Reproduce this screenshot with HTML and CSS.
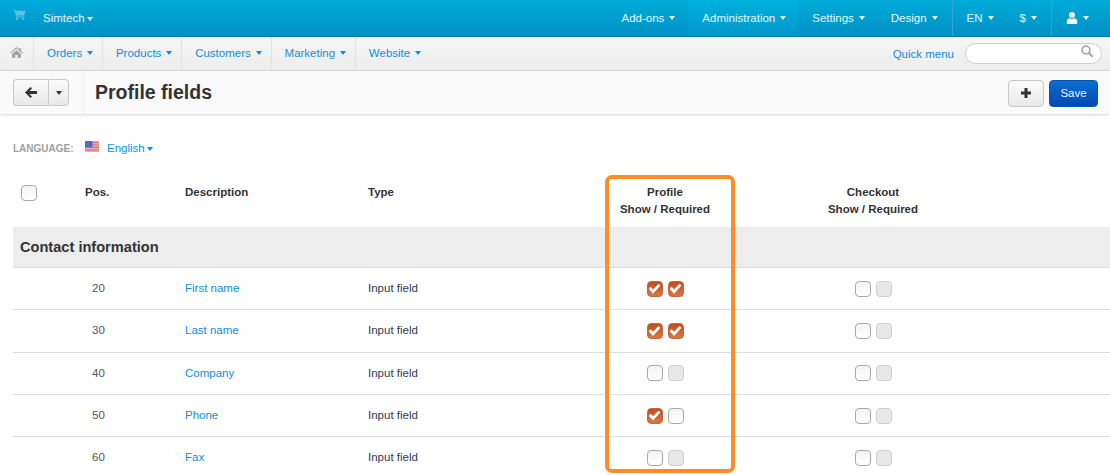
FILE: index.html
```html
<!DOCTYPE html>
<html lang="en">
<head>
<meta charset="utf-8">
<title>Profile fields</title>
<link rel="stylesheet" href="styles.css">
</head>
<body>
<header class="topbar">
  <div class="top-left">
    <svg class="cart" viewBox="0 0 14 12"><path d="M0 .5h2.500l.4 1.500H13.500l-1.300 5H4.300l.3 1.200h7.900v1.200H3.500L1.600 1.700H0z"/><circle cx="4.500" cy="10.800" r="1.200"/><circle cx="11" cy="10.800" r="1.200"/></svg>
    <span class="store">Simtech<i class="caret tight"></i></span>
  </div>
  <nav class="top-nav">
    <a class="top-item first">Add-ons<i class="caret"></i></a>
    <a class="top-item active">Administration<i class="caret"></i></a>
    <a class="top-item">Settings<i class="caret"></i></a>
    <a class="top-item last">Design<i class="caret"></i></a>
    <a class="top-item sep lang">EN<i class="caret"></i></a>
    <a class="top-item cur">$<i class="caret"></i></a>
    <a class="top-item sep user"><svg class="user-icon" viewBox="0 0 12 12"><circle cx="6" cy="3" r="2.900"/><path d="M.8 12V9.200C.8 7.400 2.200 6.400 3.800 6.200 4.400 6.700 5.100 7 6 7s1.600-.3 2.200-.8c1.600.2 3 1.200 3 3V12z"/></svg><i class="caret"></i></a>
  </nav>
</header>
<div class="subnav">
  <a class="sub-item home"><svg class="home-icon" viewBox="0 0 13 11"><path d="M6.500 0 9.500 2.600V1h1.600v3L13 5.700l-.7.800L6.500 1.500.7 6.500 0 5.700z"/><path d="M2 7 6.500 3 11 7v4H7.700V8H5.300v3H2z"/></svg></a>
  <a class="sub-item">Orders<i class="caret"></i></a>
  <a class="sub-item">Products<i class="caret"></i></a>
  <a class="sub-item">Customers<i class="caret"></i></a>
  <a class="sub-item">Marketing<i class="caret"></i></a>
  <a class="sub-item plain">Website<i class="caret"></i></a>
  <a class="quick">Quick menu</a>
  <div class="search"><svg class="search-icon" viewBox="0 0 12 12"><circle cx="5" cy="5" r="3.900" fill="none" stroke="#a9a9a9" stroke-width="1.700"/><path d="m8 8 3.200 3.200" stroke="#a9a9a9" stroke-width="2.200" stroke-linecap="round"/></svg></div>
</div>
<div class="titlebar">
  <div class="btn-group">
    <button class="btn back"><svg class="arrow" viewBox="0 0 12 11"><path d="M5.500 0 7 1.500 4.500 4H12v3H4.500L7 9.500 5.500 11 0 5.500z"/></svg></button>
    <button class="btn more"><i class="caret dark"></i></button>
  </div>
  <h1 class="title">Profile fields</h1>
  <button class="btn plus"><svg class="plus-icon" viewBox="0 0 10 10"><path d="M3.500 0h3v3.500H10v3H6.500V10h-3V6.500H0v-3h3.500z"/></svg></button>
  <button class="btn save">Save</button>
</div>
<main class="content">
  <div class="language">
    <span class="lang-label">LANGUAGE:</span>
    <svg class="flag" viewBox="0 0 14 11"><rect width="14" height="11" fill="#f3a7a7"/><path d="M0 1.500h14M0 4h14M0 6.500h14M0 9h14" stroke="#e76a6a" stroke-width="1"/><rect width="7.500" height="6" fill="#5a67c9"/></svg>
    <a class="lang-link">English<i class="caret tight"></i></a>
  </div>
  <div class="row head">
    <div><span class="cb"></span></div>
    <div>Pos.</div>
    <div>Description</div>
    <div>Type</div>
    <div class="center">Profile<br>Show / Required</div>
    <div class="center">Checkout<br>Show / Required</div>
  </div>
  <div class="section">Contact information</div>
  <div class="row item">
    <div></div><div class="pos">20</div><div class="name"><a class="link">First name</a></div><div class="type">Input field</div>
    <div class="pair"><span class="cb on"></span><span class="cb on"></span></div>
    <div class="pair"><span class="cb"></span><span class="cb off"></span></div>
  </div>
  <div class="row item">
    <div></div><div class="pos">30</div><div class="name"><a class="link">Last name</a></div><div class="type">Input field</div>
    <div class="pair"><span class="cb on"></span><span class="cb on"></span></div>
    <div class="pair"><span class="cb"></span><span class="cb off"></span></div>
  </div>
  <div class="row item">
    <div></div><div class="pos">40</div><div class="name"><a class="link">Company</a></div><div class="type">Input field</div>
    <div class="pair"><span class="cb"></span><span class="cb off"></span></div>
    <div class="pair"><span class="cb"></span><span class="cb off"></span></div>
  </div>
  <div class="row item">
    <div></div><div class="pos">50</div><div class="name"><a class="link">Phone</a></div><div class="type">Input field</div>
    <div class="pair"><span class="cb on"></span><span class="cb"></span></div>
    <div class="pair"><span class="cb"></span><span class="cb off"></span></div>
  </div>
  <div class="row item">
    <div></div><div class="pos">60</div><div class="name"><a class="link">Fax</a></div><div class="type">Input field</div>
    <div class="pair"><span class="cb"></span><span class="cb off"></span></div>
    <div class="pair"><span class="cb"></span><span class="cb off"></span></div>
  </div>
</main>
<div class="highlight"></div>
</body>
</html>
```
FILE: styles.css
```css
* { box-sizing: border-box; }
html, body { margin: 0; height: 475px; overflow: hidden; }
body { position: relative; background: #fff; font-family: "Liberation Sans", Arial, sans-serif; font-size: 11.5px; color: #333; }
a { text-decoration: none; }
.caret { display: inline-block; width: 0; height: 0; margin-left: 5px; vertical-align: middle; border-left: 3.500px solid transparent; border-right: 3.500px solid transparent; border-top: 4px solid currentColor; }
.caret.tight { margin-left: 2px; }
.caret.dark { color: #333; margin: 0; }

.topbar { display: flex; justify-content: space-between; height: 37px; background: linear-gradient(#00acd9, #0090c4); border-bottom: 1px solid #0077a6; color: #e8f6fb; }
.top-left { display: flex; align-items: center; padding-left: 13px; }
.cart { width: 13px; height: 11px; margin-top: -7px; fill: #5cc2e4; }
.store { margin-left: 17px; }
.top-nav { display: flex; padding-right: 9px; }
.top-item { display: flex; align-items: center; padding: 0 12px 0 14px; color: #e8f6fb; }
.top-item.first { padding-right: 13px; }
.top-item.active { background: linear-gradient(#00b1de, #0098cb); }
.top-item.last { padding-right: 14px; }
.top-item.sep { border-left: 1px solid #2fa6d6; }
.top-item.lang { padding-right: 12px; }
.top-item.cur { padding: 0 14px 0 14px; }
.user-icon { width: 12px; height: 12px; fill: #f2fafd; }

.subnav { display: flex; align-items: stretch; height: 34px; background: linear-gradient(#f6f6f6, #ededed); border-bottom: 1px solid #dcdcdc; }
.sub-item { display: flex; align-items: center; padding: 0 8.800px 2px 13px; color: #0d8fe0; border-right: 1px solid #e2e2e2; }
.sub-item.home { padding: 0 0 2px; width: 34px; justify-content: center; }
.sub-item.plain { border-right: 0; }
.home-icon { width: 13px; height: 11px; fill: #a5a5a5; margin-top: -1px; }
.quick { margin-left: auto; align-self: center; color: #0d8fe0; margin-top: 1px; }
.search { align-self: center; position: relative; width: 137px; height: 21px; margin: -1px 8px 0 11px; background: #fff; border: 1px solid #cfcfcf; border-radius: 11px; }
.search-icon { position: absolute; right: 8px; top: 1px; width: 12px; height: 12px; }

.titlebar { display: flex; align-items: center; height: 43px; padding: 0 12px 0 13px; background: #fafafa; box-shadow: 0 1px 3px rgba(0, 0, 0, .16); position: relative; }
.btn-group { display: flex; padding-right: 14px; height: 43px; align-items: center; border-right: 1px solid #f0f0f0; }
.btn { display: flex; align-items: center; justify-content: center; height: 27px; padding: 0; border: 1px solid #c8c8c8; border-radius: 4px; background: linear-gradient(#fbfbfb, #e9e9e9); font: inherit; }
.back { width: 35px; border-radius: 4px 0 0 4px; border-right: 0; }
.more { width: 21px; border-radius: 0 4px 4px 0; }
.arrow { width: 12px; height: 11px; fill: #333; }
.title { margin: 0 auto 0 11px; font-size: 19.500px; font-weight: 700; color: #333; }
.plus { width: 36px; margin-top: 1px; }
.plus-icon { width: 10px; height: 10px; fill: #333; }
.save { width: 49px; margin: 1px 0 0 5px; border: 1px solid #0b52b8; background: linear-gradient(#0a6fd1, #0447b3); color: #eef5fc; }

.content { padding-left: 13px; }
.language { display: flex; align-items: center; height: 20px; margin-top: 24px; }
.lang-label { width: 72px; font-size: 10px; font-weight: 700; color: #a0a0a0; }
.flag { width: 14px; height: 11px; margin-top: -4px; }
.lang-link { margin-left: 8px; color: #0d8fe0; }
.row { display: grid; grid-template-columns: 72px 100px 183px 193px 208px 208px 1fr; align-items: center; }
.head { height: 69px; padding-top: 26px; align-items: start; font-weight: 700; line-height: 17px; color: #333; }
.head .cb { margin-top: 1px; }
.center { text-align: center; }
.section { height: 41px; padding-left: 7px; line-height: 40px; font-size: 14.600px; font-weight: 700; background: #ededed; border-bottom: 1px solid #dcdcdc; color: #333; }
.item { height: 42.300px; border-bottom: 1px solid #dcdcdc; }
.pos { padding-left: 7px; color: #555; margin-top: -1.200px; }
.name { margin-top: -1.200px; }
.link { color: #0d8fe0; }
.type { color: #2f3a55; margin-top: -1.200px; }
.pair { display: flex; justify-content: center; gap: 5px; }
.cb { display: block; position: relative; width: 16px; height: 16px; margin-left: 8px; background: linear-gradient(#f3f3f3, #fff); border: 1px solid #a8a8a8; border-radius: 4px; }
.pair .cb { margin-left: 0; }
.cb.off { background: #e8e8e8; border-color: #cfcfcf; }
.cb.on { background: linear-gradient(#bd4f22, #dc7444); border-color: #c4683f; }
.cb.on::after { content: ""; position: absolute; left: 1px; top: 2px; width: 12px; height: 10px; background: #fff; clip-path: polygon(0 52%, 18% 32%, 38% 58%, 84% 0, 100% 18%, 38% 100%); }

.highlight { position: absolute; left: 605px; top: 175px; width: 130px; height: 298px; border: 4px solid #ff8c26; border-radius: 7px; pointer-events: none; }
```
